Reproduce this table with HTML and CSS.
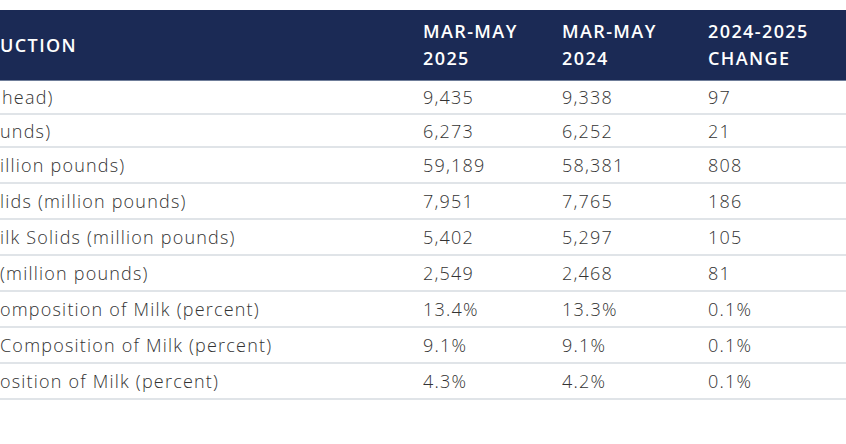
FILE: index.html
```html
<!DOCTYPE html>
<html lang="en">
<head>
<meta charset="utf-8">
<title>Milk Production</title>
<link rel="stylesheet" href="styles.css">
</head>
<body>
<div class="table">
  <div class="row head">
    <div class="cell label">UCTION</div>
    <div class="cell">MAR-MAY<br>2025</div>
    <div class="cell">MAR-MAY<br>2024</div>
    <div class="cell">2024-2025<br>CHANGE</div>
  </div>
  <div class="row r34">
    <div class="cell label"><span class="ind2">head)</span></div>
    <div class="cell">9,435</div>
    <div class="cell">9,338</div>
    <div class="cell">97</div>
  </div>
  <div class="row r33">
    <div class="cell label">unds)</div>
    <div class="cell">6,273</div>
    <div class="cell">6,252</div>
    <div class="cell">21</div>
  </div>
  <div class="row">
    <div class="cell label">illion pounds)</div>
    <div class="cell">59,189</div>
    <div class="cell">58,381</div>
    <div class="cell">808</div>
  </div>
  <div class="row">
    <div class="cell label">lids (million pounds)</div>
    <div class="cell">7,951</div>
    <div class="cell">7,765</div>
    <div class="cell">186</div>
  </div>
  <div class="row">
    <div class="cell label">ilk Solids (million pounds)</div>
    <div class="cell">5,402</div>
    <div class="cell">5,297</div>
    <div class="cell">105</div>
  </div>
  <div class="row">
    <div class="cell label">(million pounds)</div>
    <div class="cell">2,549</div>
    <div class="cell">2,468</div>
    <div class="cell">81</div>
  </div>
  <div class="row">
    <div class="cell label">omposition of Milk (percent)</div>
    <div class="cell">13.4%</div>
    <div class="cell">13.3%</div>
    <div class="cell">0.1%</div>
  </div>
  <div class="row">
    <div class="cell label">Composition of Milk (percent)</div>
    <div class="cell">9.1%</div>
    <div class="cell">9.1%</div>
    <div class="cell">0.1%</div>
  </div>
  <div class="row">
    <div class="cell label">osition of Milk (percent)</div>
    <div class="cell">4.3%</div>
    <div class="cell">4.2%</div>
    <div class="cell">0.1%</div>
  </div>
</div>
</body>
</html>
```
FILE: styles.css
```css
html, body {
  margin: 0;
  padding: 0;
  background: #ffffff;
}

body {
  font-family: "Open Sans", "Liberation Sans", sans-serif;
  color: #333333;
  overflow: hidden;
}

.table {
  margin-top: 10px;
  width: 846px;
}

.row {
  display: grid;
  grid-template-columns: 423px 139px 146px 1fr;
  align-items: center;
  height: 36px;
  border-bottom: 2px solid #e0e4e8;
  box-sizing: border-box;
  font-size: 18px;
  font-weight: 300;
  letter-spacing: 1.2px;
  white-space: nowrap;
}

.row.r34 { height: 34px; }
.row.r33 { height: 33px; }

.row.head {
  height: 71px;
  background: #1b2a55;
  color: #ffffff;
  border-bottom: 1px solid #6f7d99;
  font-size: 18px;
  font-weight: 600;
  letter-spacing: 1.4px;
  line-height: 27px;
}

.cell {
  overflow: hidden;
}

.label {
  padding-left: 0;
}

.ind2 {
  padding-left: 2px;
}
```
